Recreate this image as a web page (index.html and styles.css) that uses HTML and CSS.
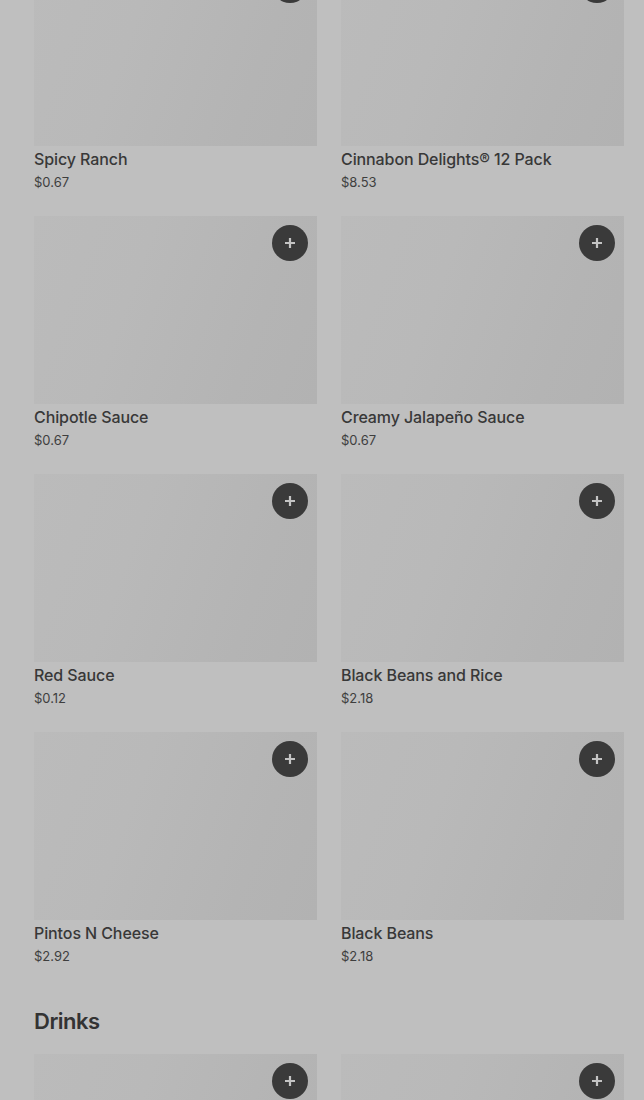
FILE: index.html
```html
<!DOCTYPE html>
<html lang="en">
<head>
  <meta charset="UTF-8">
  <meta name="viewport" content="width=device-width, initial-scale=1.0">
  <title>Menu</title>
  <link rel="stylesheet" href="styles.css">
</head>
<body>
  <div class="menu">
    <!-- Sides & sauces (scrolled, first row cut off) -->
    <section class="menu-section first">
      <div class="item-grid">
        <div class="item">
          <div class="item-image"><button class="add-btn" aria-label="Add"><svg viewBox="0 0 12 12"><path d="M6 1v10M1 6h10"/></svg></button></div>
          <div class="item-name">Spicy Ranch</div>
          <div class="item-price">$0.67</div>
        </div>
        <div class="item">
          <div class="item-image"><button class="add-btn" aria-label="Add"><svg viewBox="0 0 12 12"><path d="M6 1v10M1 6h10"/></svg></button></div>
          <div class="item-name">Cinnabon Delights® 12 Pack</div>
          <div class="item-price">$8.53</div>
        </div>
        <div class="item">
          <div class="item-image"><button class="add-btn" aria-label="Add"><svg viewBox="0 0 12 12"><path d="M6 1v10M1 6h10"/></svg></button></div>
          <div class="item-name">Chipotle Sauce</div>
          <div class="item-price">$0.67</div>
        </div>
        <div class="item">
          <div class="item-image"><button class="add-btn" aria-label="Add"><svg viewBox="0 0 12 12"><path d="M6 1v10M1 6h10"/></svg></button></div>
          <div class="item-name">Creamy Jalapeño Sauce</div>
          <div class="item-price">$0.67</div>
        </div>
        <div class="item">
          <div class="item-image"><button class="add-btn" aria-label="Add"><svg viewBox="0 0 12 12"><path d="M6 1v10M1 6h10"/></svg></button></div>
          <div class="item-name">Red Sauce</div>
          <div class="item-price">$0.12</div>
        </div>
        <div class="item">
          <div class="item-image"><button class="add-btn" aria-label="Add"><svg viewBox="0 0 12 12"><path d="M6 1v10M1 6h10"/></svg></button></div>
          <div class="item-name">Black Beans and Rice</div>
          <div class="item-price">$2.18</div>
        </div>
        <div class="item">
          <div class="item-image"><button class="add-btn" aria-label="Add"><svg viewBox="0 0 12 12"><path d="M6 1v10M1 6h10"/></svg></button></div>
          <div class="item-name">Pintos N Cheese</div>
          <div class="item-price">$2.92</div>
        </div>
        <div class="item">
          <div class="item-image"><button class="add-btn" aria-label="Add"><svg viewBox="0 0 12 12"><path d="M6 1v10M1 6h10"/></svg></button></div>
          <div class="item-name">Black Beans</div>
          <div class="item-price">$2.18</div>
        </div>
      </div>
    </section>

    <section class="menu-section">
      <h2 class="section-title">Drinks</h2>
      <div class="item-grid">
        <div class="item">
          <div class="item-image"><button class="add-btn" aria-label="Add"><svg viewBox="0 0 12 12"><path d="M6 1v10M1 6h10"/></svg></button></div>
        </div>
        <div class="item">
          <div class="item-image"><button class="add-btn" aria-label="Add"><svg viewBox="0 0 12 12"><path d="M6 1v10M1 6h10"/></svg></button></div>
        </div>
      </div>
    </section>
  </div>
</body>
</html>
```

FILE: styles.css
```css
html, body {
  margin: 0;
  padding: 0;
  background-color: #bfbfbf;
  overflow: hidden;
}
body {
  font-family: Inter, "Noto Sans", sans-serif;
  color: #333;
}
.menu {
  padding: 0 20px 0 34px;
}
.menu-section.first {
  margin-top: -42px;
}
.item-grid {
  display: grid;
  grid-template-columns: 283px 283px;
  column-gap: 24px;
  row-gap: 25px;
}
.item-image {
  position: relative;
  height: 188px;
  background: linear-gradient(110deg, #bbbbbb 0%, #b9b9b9 35%, #b4b4b4 75%, #b2b2b2 100%);
}
.add-btn {
  position: absolute;
  top: 9px;
  right: 9px;
  width: 36px;
  height: 36px;
  border: none;
  border-radius: 50%;
  background-color: #3a3a3a;
  padding: 0;
  display: flex;
  align-items: center;
  justify-content: center;
}
.add-btn svg {
  width: 12px;
  height: 12px;
  stroke: #c4c4c4;
  stroke-width: 2.2;
  fill: none;
}
.item-name {
  margin-top: 2px;
  font-size: 16px;
  font-weight: 500;
  line-height: 22px;
  color: #383838;
  letter-spacing: -0.1px;
}
.item-price {
  margin-top: 3px;
  font-size: 13px;
  line-height: 18px;
  color: #3e3e3e;
}
.section-title {
  margin: 42px 0 19px;
  font-size: 22px;
  font-weight: 600;
  line-height: 28px;
  letter-spacing: -0.5px;
  color: #333;
}
```
